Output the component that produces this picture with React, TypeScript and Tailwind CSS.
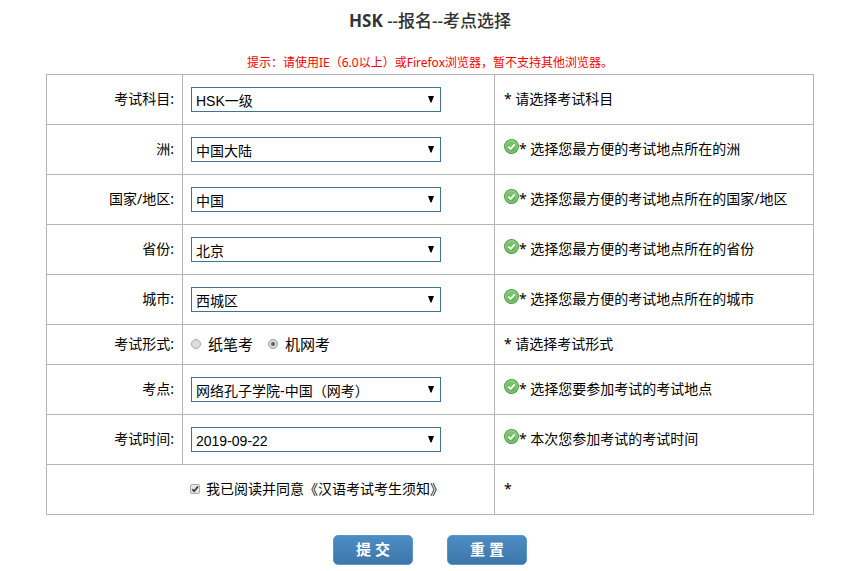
import { useId, type ReactNode } from "react";

const SANS = "font-['Noto_Sans','Noto_Sans_CJK_SC',sans-serif]";

function OkIcon() {
  return (
    <svg viewBox="0 0 14 14" className="mb-1 size-[15px] shrink-0" aria-hidden="true">
      <defs>
        <linearGradient id="ok-fill" x1="0" y1="0" x2="0" y2="1">
          <stop offset="0" stopColor="#84c878" />
          <stop offset="1" stopColor="#5cb04c" />
        </linearGradient>
      </defs>
      <circle cx="7" cy="7" r="6.5" fill="url(#ok-fill)" stroke="#4fa046" />
      <circle cx="7" cy="7" r="5.4" fill="none" stroke="#a8d99c" strokeWidth="0.7" />
      <path d="M4 7.1 6.2 9.2 10 5" fill="none" stroke="#fff" strokeWidth="1.8" />
    </svg>
  );
}

function Note({ ok = false, children }: { ok?: boolean; children?: ReactNode }) {
  return (
    <td className="border border-[#b5b5b5] pb-0.5 pl-[9px]">
      <div className="flex items-center">
        {ok && <OkIcon />}
        <span>* {children}</span>
      </div>
    </td>
  );
}

function SelectRow({ label, value, note, ok = true }: { label: string; value: string; note: string; ok?: boolean }) {
  const id = useId();
  return (
    <tr className="h-[50px]">
      <th scope="row" className="border border-[#b5b5b5] pr-2 pb-0.5 text-right font-normal">
        <label htmlFor={id}>{label}:</label>
      </th>
      <td className="border border-[#b5b5b5] pl-2">
        <div className="relative w-[250px]">
          <select
            id={id}
            defaultValue={value}
            className="block h-[25px] w-full appearance-none border border-[#41748f] bg-white pt-[3px] pl-1 font-['Liberation_Sans','Noto_Sans_CJK_SC',sans-serif] text-sm leading-5 text-black"
          >
            <option>{value}</option>
          </select>
          <svg viewBox="0 0 8 7" className="pointer-events-none absolute top-[9px] right-1.5 h-[7px] w-2" aria-hidden="true">
            <path d="M1 0H7L4.5 6.5H3.5Z" fill="#000" />
          </svg>
        </div>
      </td>
      <Note ok={ok}>{note}</Note>
    </tr>
  );
}

function ModeRadio({ label, checked = false }: { label: string; checked?: boolean }) {
  return (
    <label className="flex items-center gap-[7px] text-[15px]">
      <input
        type="radio"
        name="mode"
        defaultChecked={checked}
        className="size-[10px] appearance-none rounded-full border border-[#a9a9a9] bg-[#dedede] checked:bg-[#606060] checked:shadow-[inset_0_0_0_2px_#dedede]"
      />
      {label}
    </label>
  );
}

const BUTTON =
  "h-[30px] w-20 rounded-[5px] border border-[#5b97c8] bg-linear-to-b from-[#4c8dc4] to-[#3e76aa] pb-0.5 text-[15px] leading-5 font-bold text-white";

export default function App() {
  return (
    <main className={`${SANS} pt-2 pr-[34px] pl-[46px] text-sm leading-5 text-black`}>
      <h1 className="text-center text-[17px] leading-[26px] font-bold text-[#333]">
        HSK <span className="font-medium">--报名--考点选择</span>
      </h1>
      <p className="mt-5 pb-0.5 text-center text-xs leading-[18px] text-[#f00]">
        提示：请使用IE（6.0以上）或Firefox浏览器，暂不支持其他浏览器。
      </p>
      <form onSubmit={(event) => event.preventDefault()}>
        <table className="w-full table-fixed border-collapse">
          <colgroup>
            <col className="w-[136px]" />
            <col className="w-[312px]" />
            <col />
          </colgroup>
          <tbody>
            <SelectRow label="考试科目" value="HSK一级" note="请选择考试科目" ok={false} />
            <SelectRow label="洲" value="中国大陆" note="选择您最方便的考试地点所在的洲" />
            <SelectRow label="国家/地区" value="中国" note="选择您最方便的考试地点所在的国家/地区" />
            <SelectRow label="省份" value="北京" note="选择您最方便的考试地点所在的省份" />
            <SelectRow label="城市" value="西城区" note="选择您最方便的考试地点所在的城市" />
            <tr className="h-10">
              <th scope="row" className="border border-[#b5b5b5] pr-2 pb-0.5 text-right font-normal">
                考试形式:
              </th>
              <td className="border border-[#b5b5b5] pb-0.5 pl-2">
                <div className="flex gap-[15px]">
                  <ModeRadio label="纸笔考" />
                  <ModeRadio label="机网考" checked />
                </div>
              </td>
              <Note>请选择考试形式</Note>
            </tr>
            <SelectRow label="考点" value="网络孔子学院-中国（网考）" note="选择您要参加考试的考试地点" />
            <SelectRow label="考试时间" value="2019-09-22" note="本次您参加考试的考试时间" />
            <tr className="h-[50px]">
              <td colSpan={2} className="border border-[#b5b5b5] pb-0.5 pl-[143px]">
                <label className="flex items-center gap-1.5">
                  <span className="relative block size-[10px]">
                    <input
                      type="checkbox"
                      defaultChecked
                      className="peer block size-[10px] appearance-none rounded-[2px] border border-[#a9a9a9] bg-[#e4e4e4]"
                    />
                    <svg
                      viewBox="0 0 10 10"
                      className="pointer-events-none absolute inset-0 hidden peer-checked:block"
                      aria-hidden="true"
                    >
                      <path d="M2.3 5.2 4.2 7.3 7.9 2.5" fill="none" stroke="#333" strokeWidth="1.7" />
                    </svg>
                  </span>
                  我已阅读并同意《汉语考试考生须知》
                </label>
              </td>
              <Note />
            </tr>
          </tbody>
        </table>
        <div className="flex justify-center gap-[34px] pt-5">
          <button type="submit" className={BUTTON}>
            提 交
          </button>
          <button type="reset" className={BUTTON}>
            重 置
          </button>
        </div>
      </form>
    </main>
  );
}
